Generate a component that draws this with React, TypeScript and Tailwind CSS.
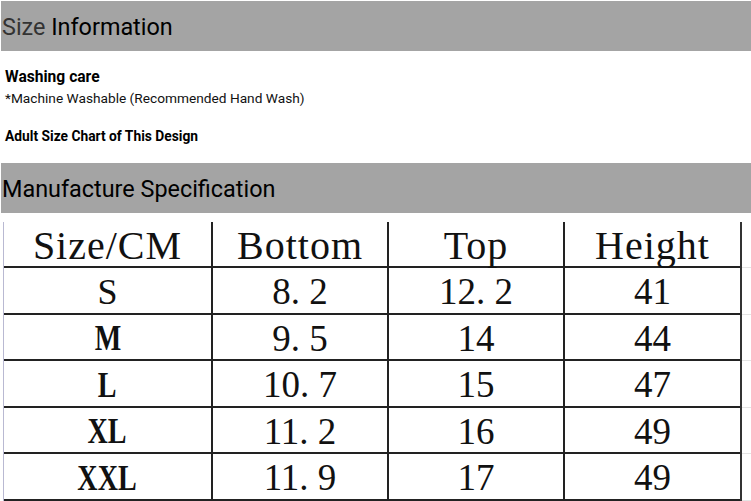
const rows = [
  ['S', '8. 2', '12. 2', '41'],
  ['M', '9. 5', '14', '44'],
  ['L', '10. 7', '15', '47'],
  ['XL', '11. 2', '16', '49'],
  ['XXL', '11. 9', '17', '49'],
];

const headers = ['Size/CM', 'Bottom', 'Top', 'Height'];

function SectionBar({ children }: { children: React.ReactNode }) {
  return (
    <div className="h-[50px] bg-[#a4a4a4] flex items-center pl-[1px] pt-[3px] text-[23.4px] text-black">
      {children}
    </div>
  );
}

export default function App() {
  return (
    <div className="w-[751px] h-[501px] bg-white overflow-hidden pt-[1px] pl-[1px] font-['Roboto',sans-serif]">
      <SectionBar>
        <span className="text-[#333]">Size</span>&nbsp;Information
      </SectionBar>

      <div className="px-[4px] pt-[17px] h-[112px]">
        <div className="text-[15.6px] font-bold text-black leading-[18px]">Washing care</div>
        <div className="text-[13.7px] text-[#111] leading-[16px] mt-[4px]">
          *Machine Washable (Recommended Hand Wash)
        </div>
        <div className="text-[13.8px] font-bold text-black leading-[16px] mt-[22px]">
          Adult Size Chart of This Design
        </div>
      </div>

      <SectionBar>Manufacture Specification</SectionBar>

      <div className="mt-[9px] ml-[2px] flex font-['Liberation_Serif',serif] text-[#111]">
        <div className="grid grid-cols-[207px_176px_176px_177px] border-l border-l-[#b9b9d2] border-r-2 border-r-[#333]">
          {headers.map((h, i) => (
            <div
              key={h}
              className={`h-[46px] flex items-center justify-center text-[40px] tracking-[1px] leading-none pt-[4px] border-b-2 border-[#222] ${
                i > 0 ? 'border-l-2' : ''
              }`}
            >
              {h}
            </div>
          ))}
          {rows.map((r) =>
            r.map((c, i) => (
              <div
                key={r[0] + i}
                className={`h-[46.5px] flex items-center justify-center leading-none pt-[3px] border-b-2 border-[#222] ${
                  i > 0 ? 'border-l-2 text-[37px]' : 'text-[36px]'
                }`}
              >
                {i === 0 && c !== 'S' ? (
                  <span className="inline-block font-bold scale-x-[0.78]">{c}</span>
                ) : (
                  c
                )}
              </div>
            ))
          )}
        </div>
        <div className="flex-1 flex flex-col">
          <div className="h-[46px] border-b border-[#e4e4e4]" />
          {rows.map((r) => (
            <div key={r[0]} className="h-[46.5px] border-b border-[#e4e4e4]" />
          ))}
        </div>
      </div>
    </div>
  );
}
